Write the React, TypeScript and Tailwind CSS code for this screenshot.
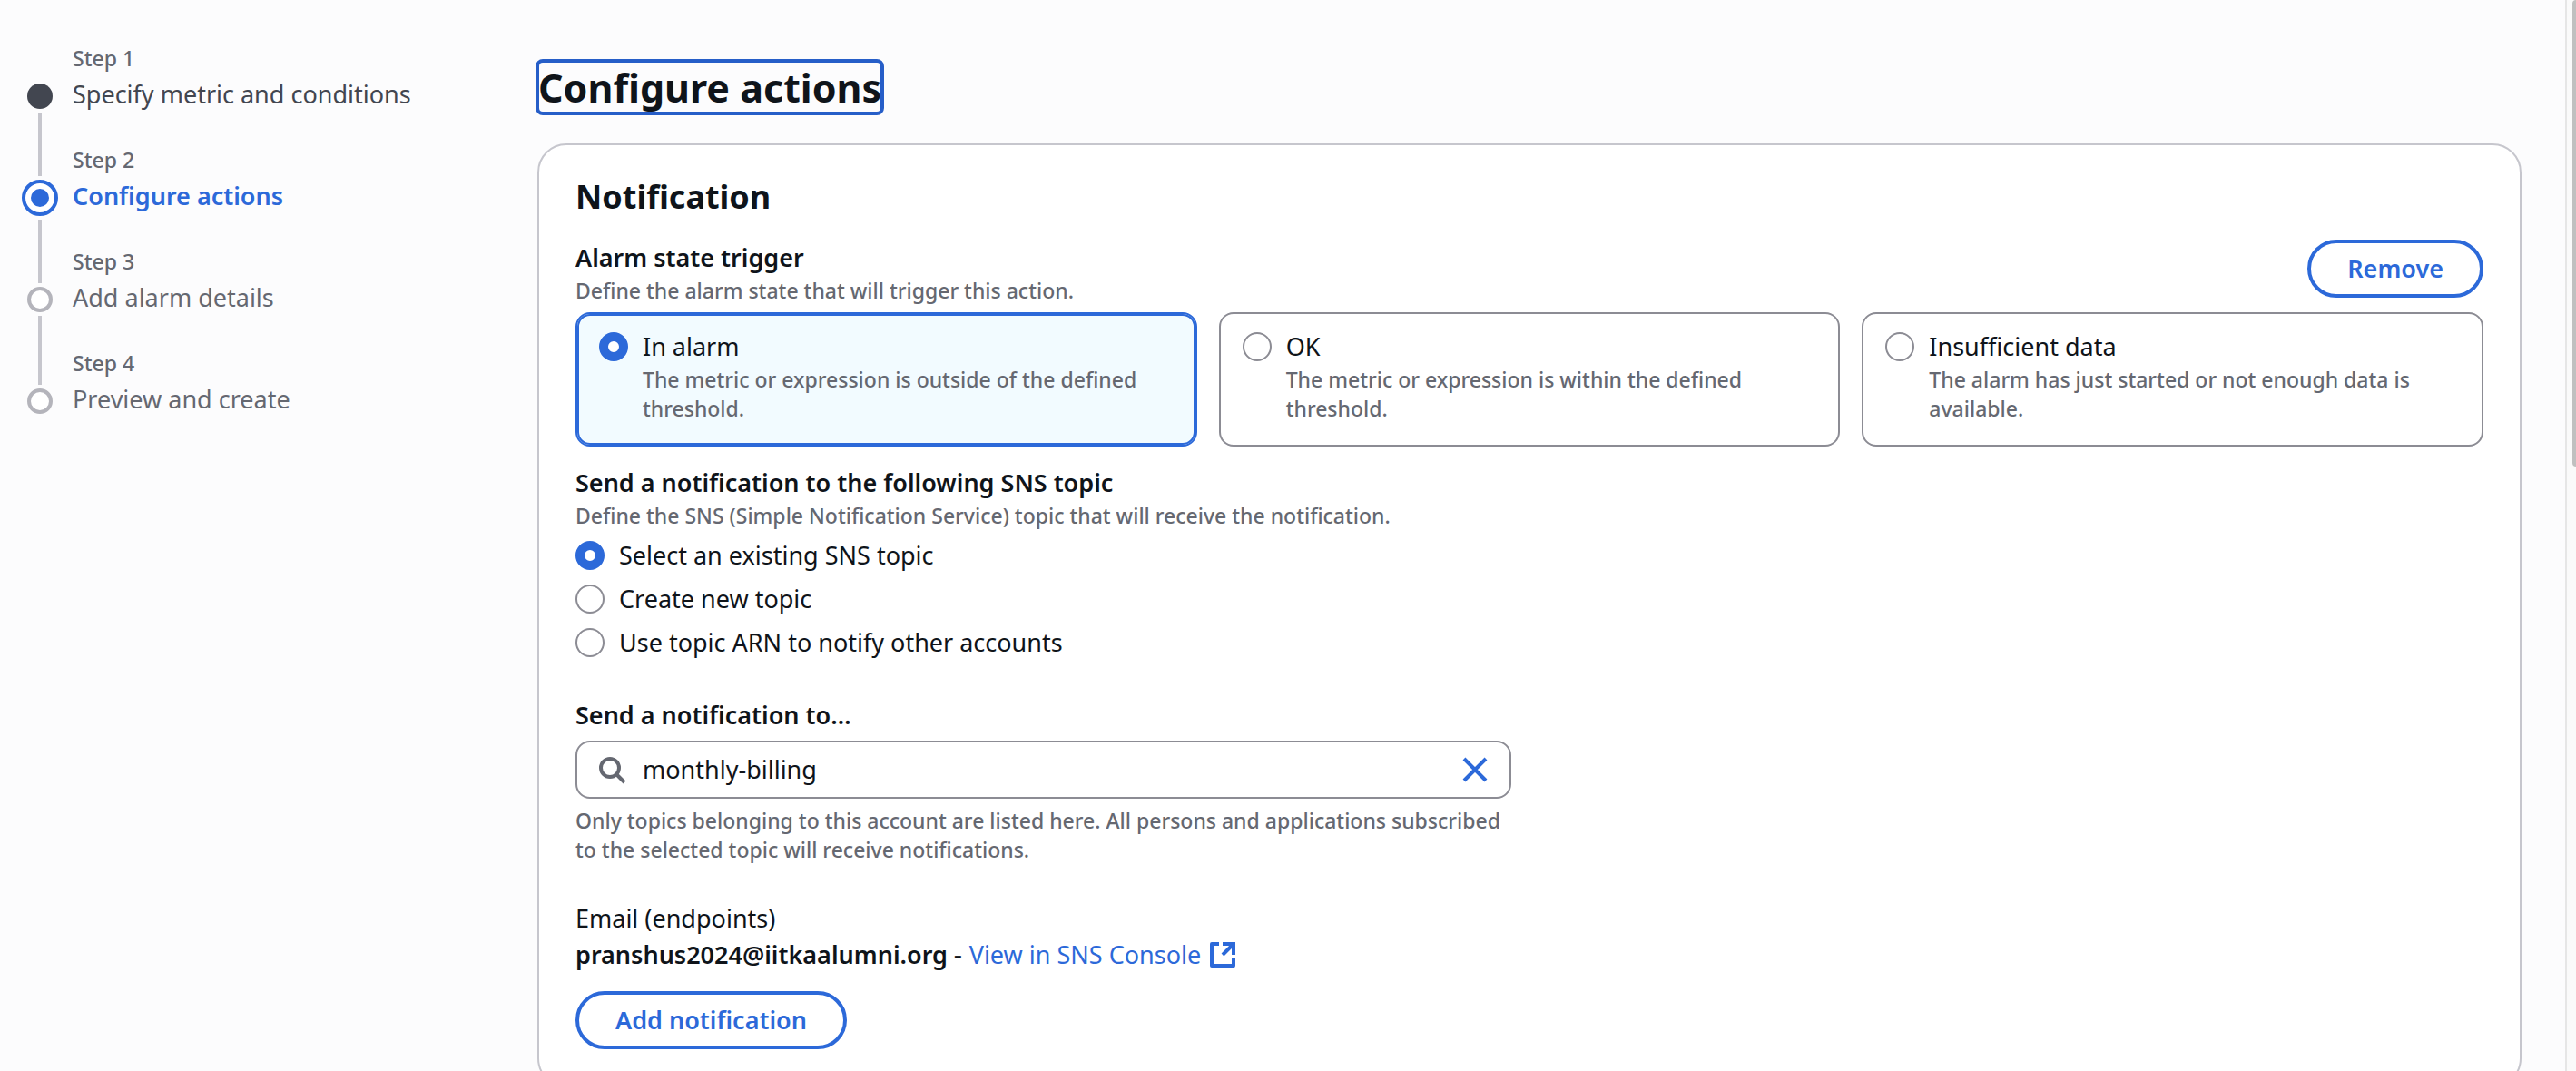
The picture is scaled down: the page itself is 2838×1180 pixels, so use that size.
import { useState } from "react";
import type { ReactNode } from "react";

type StepState = "done" | "active" | "todo";

const steps: { title: string; state: StepState }[] = [
  { title: "Specify metric and conditions", state: "done" },
  { title: "Configure actions", state: "active" },
  { title: "Add alarm details", state: "todo" },
  { title: "Preview and create", state: "todo" },
];

const alarmStates = [
  { id: "alarm", title: "In alarm", text: "The metric or expression is outside of the defined threshold." },
  { id: "ok", title: "OK", text: "The metric or expression is within the defined threshold." },
  { id: "insufficient", title: "Insufficient data", text: "The alarm has just started or not enough data is available." },
];

const topicModes = [
  { id: "existing", title: "Select an existing SNS topic" },
  { id: "new", title: "Create new topic" },
  { id: "arn", title: "Use topic ARN to notify other accounts" },
];

const radioClass =
  "size-8 shrink-0 appearance-none rounded-full border-2 border-[#8c8c94] bg-white checked:border-[10px] checked:border-[#2c69d9]";

function StepMarker({ state }: { state: StepState }) {
  if (state === "active") {
    return (
      <span className="my-1 flex size-10 items-center justify-center rounded-full border-4 border-[#2c69d9] bg-white">
        <span className="size-5 rounded-full bg-[#2c69d9]" />
      </span>
    );
  }
  return state === "done" ? (
    <span className="my-1 size-7 rounded-full bg-[#424650]" />
  ) : (
    <span className="my-1 size-7 rounded-full border-4 border-[#b4b4bb] bg-white" />
  );
}

function Step({ index, title, state }: { index: number; title: string; state: StepState }) {
  const first = index === 0;
  const last = index === steps.length - 1;
  const titleColor =
    state === "active" ? "font-semibold text-[#2c69d9]" : state === "done" ? "text-[#424650]" : "text-[#656871]";
  return (
    <li className="flex gap-4" aria-current={state === "active" ? "step" : undefined}>
      <div className="flex w-10 flex-col items-center">
        <span className={`w-1 ${state === "active" ? "h-[34px]" : "h-10"} ${first ? "" : "bg-[#c6c6cd]"}`} />
        <StepMarker state={state} />
        <span className={`w-1 flex-1 ${last ? "" : "bg-[#c6c6cd]"}`} />
      </div>
      <div className={last ? "" : "pb-9"}>
        <div className="text-[23px] leading-8 font-medium text-[#656871]">Step {index + 1}</div>
        <div className={`mt-1 text-[27px] leading-10 ${titleColor}`}>{title}</div>
      </div>
    </li>
  );
}

function PillButton({ children }: { children: ReactNode }) {
  return (
    <button
      type="button"
      className="h-16 rounded-full border-4 border-[#2c69d9] bg-white px-10 font-semibold whitespace-nowrap text-[#2c69d9]"
    >
      {children}
    </button>
  );
}

export default function App() {
  const [alarm, setAlarm] = useState("alarm");
  const [mode, setMode] = useState("existing");
  const [topic, setTopic] = useState("monthly-billing");

  return (
    <div className="flex h-screen overflow-hidden bg-[#fcfcfd] font-['Noto_Sans',sans-serif] text-[27px] leading-10 text-[#0f141a]">
      <nav aria-label="Steps" className="w-[592px] shrink-0 pt-12 pl-6">
        <ol>
          {steps.map((s, i) => (
            <Step key={s.title} index={i} title={s.title} state={s.state} />
          ))}
        </ol>
      </nav>

      <main className="min-w-0 flex-1 pt-[67px] pr-12">
        <h1 className="w-fit rounded-md px-px pt-0.5 text-[43px] leading-[56px] font-bold outline-4 -outline-offset-2 outline-[#265ec8]">
          Configure actions
        </h1>

        <section className="mt-[33px] rounded-[32px] border-2 border-[#c6c6cd] bg-white px-10 pt-8 pb-10">
          <h2 className="text-[36px] leading-[50px] font-bold">Notification</h2>

          <div className="mt-[22px] flex items-start justify-between">
            <div>
              <h3 id="trigger-label" className="font-semibold">
                Alarm state trigger
              </h3>
              <p className="text-[23px] leading-8 font-medium text-[#656871]">
                Define the alarm state that will trigger this action.
              </p>
            </div>
            <PillButton>Remove</PillButton>
          </div>

          <div role="radiogroup" aria-labelledby="trigger-label" className="mt-2 grid grid-cols-3 gap-6">
            {alarmStates.map((s) => (
              <label
                key={s.id}
                className="flex gap-4 rounded-2xl border-2 border-[#8c8c94] px-6 pt-4 pb-6 has-checked:border-[#2c69d9] has-checked:bg-[#f2fbff] has-checked:inset-ring-2 has-checked:inset-ring-[#2c69d9]"
              >
                <input
                  type="radio"
                  name="alarm-state"
                  checked={alarm === s.id}
                  onChange={() => setAlarm(s.id)}
                  className={`mt-1 ${radioClass}`}
                />
                <span>
                  <span className="block">{s.title}</span>
                  <span className="block text-[23px] leading-8 font-medium text-[#656871]">{s.text}</span>
                </span>
              </label>
            ))}
          </div>

          <h3 id="topic-label" className="mt-5 font-semibold">
            Send a notification to the following SNS topic
          </h3>
          <p className="text-[23px] leading-8 font-medium text-[#656871]">
            Define the SNS (Simple Notification Service) topic that will receive the notification.
          </p>
          <div role="radiogroup" aria-labelledby="topic-label" className="mt-2 flex flex-col items-start gap-2">
            {topicModes.map((m) => (
              <label key={m.id} className="flex items-center gap-4">
                <input
                  type="radio"
                  name="topic-mode"
                  checked={mode === m.id}
                  onChange={() => setMode(m.id)}
                  className={radioClass}
                />
                {m.title}
              </label>
            ))}
          </div>

          <div className="mt-10 grid grid-cols-2 gap-10">
            <div>
              <label htmlFor="topic" className="block font-semibold">
                Send a notification to…
              </label>
              <div className="mt-2 flex h-16 items-center rounded-2xl border-2 border-[#8c8c94] bg-white px-[22px]">
                <svg viewBox="0 0 32 32" className="size-8 shrink-0" fill="none" stroke="#656871" strokeWidth="4" aria-hidden="true">
                  <circle cx="14" cy="14" r="10" />
                  <path d="M21 21L30 30" />
                </svg>
                <input
                  id="topic"
                  type="text"
                  value={topic}
                  onChange={(e) => setTopic(e.target.value)}
                  className="ml-[18px] min-w-0 flex-1 bg-transparent outline-none"
                />
                <button type="button" aria-label="Clear" onClick={() => setTopic("")} className="text-[#2c69d9]">
                  <svg viewBox="0 0 32 32" className="size-8" fill="none" stroke="currentColor" strokeWidth="4" aria-hidden="true">
                    <path d="M4 4L28 28M28 4L4 28" />
                  </svg>
                </button>
              </div>
              <p className="mt-2 text-[23px] leading-8 font-medium text-[#656871]">
                Only topics belonging to this account are listed here. All persons and applications subscribed to the
                selected topic will receive notifications.
              </p>
            </div>
          </div>

          <div className="mt-10">Email (endpoints)</div>
          <div className="flex items-center gap-2">
            <strong className="font-semibold">pranshus2024@iitkaalumni.org -</strong>
            <a href="#sns" className="flex items-center gap-2.5 text-[#2c69d9]">
              View in SNS Console
              <svg viewBox="0 0 28 28" className="size-7" fill="none" stroke="currentColor" strokeWidth="4" aria-hidden="true">
                <path d="M10 2H2V26H26V18" strokeLinejoin="round" />
                <path d="M14 2H26V14M26 2L14 14" />
              </svg>
            </a>
          </div>
          <div className="mt-5 flex">
            <PillButton>Add notification</PillButton>
          </div>
        </section>
      </main>

      <div className="flex w-3 shrink-0 items-start justify-end border-l-2 border-[#e6e6e6] bg-[#fafafa]">
        <div className="h-[514px] w-1 rounded-l bg-[#c0c0c0]" />
      </div>
    </div>
  );
}
